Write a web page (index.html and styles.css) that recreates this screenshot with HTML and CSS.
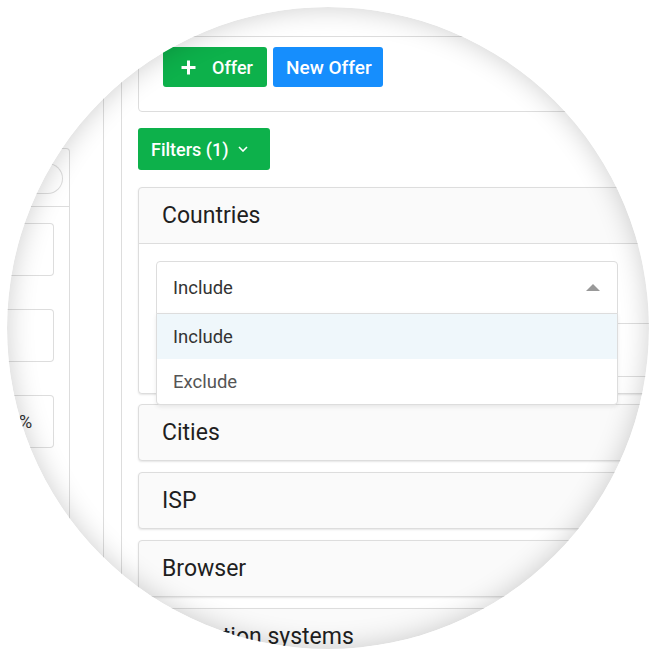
FILE: index.html
```html
<!DOCTYPE html>
<html lang="en">
<head>
  <meta charset="utf-8">
  <meta name="viewport" content="width=device-width, initial-scale=1.0">
  <title>Offer filters</title>
  <link rel="stylesheet" href="styles.css">
</head>
<body>

  <div class="lens">
    <div class="screen">

      <!-- Sidebar (mostly cut off by the lens) -->
      <aside class="side">
        <div class="side-panel">
          <div class="side-head">
            <div class="pill"></div>
          </div>
          <div class="side-body">
            <div class="side-input"></div>
            <div class="side-input"></div>
            <div class="side-input"><span>%</span></div>
          </div>
        </div>
      </aside>

      <!-- Main column -->
      <main class="main">

        <div class="card actions">
          <button class="btn btn-green btn-offer" type="button">
            <svg width="17" height="17" viewBox="0 0 17 17" aria-hidden="true">
              <path d="M8.5 1.5v14M1.5 8.5h14" stroke="#fff" stroke-width="3" fill="none"/>
            </svg>
            Offer
          </button>
          <button class="btn btn-blue btn-new" type="button">New Offer</button>
        </div>

        <button class="btn btn-green btn-filters" type="button">
          Filters (1)
          <svg width="10" height="6" viewBox="0 0 10 6" aria-hidden="true">
            <polyline points="1,1 5,5 9,1" stroke="#fff" stroke-width="1.6" fill="none"/>
          </svg>
        </button>

        <section class="panel open">
          <h2 class="panel-head">Countries</h2>
          <div class="panel-body">
            <div class="select-wrap">
              <div class="select">
                <span>Include</span>
                <svg width="14" height="7" viewBox="0 0 14 7" aria-hidden="true">
                  <polygon points="0,7 7,0 14,7" fill="#999"/>
                </svg>
              </div>
              <ul class="dropdown">
                <li class="active">Include</li>
                <li>Exclude</li>
              </ul>
            </div>
            <div class="tags-box"></div>
          </div>
        </section>

        <section class="panel"><h2 class="panel-head">Cities</h2></section>
        <section class="panel"><h2 class="panel-head">ISP</h2></section>
        <section class="panel"><h2 class="panel-head">Browser</h2></section>
        <section class="panel"><h2 class="panel-head">Operation systems</h2></section>

      </main>
    </div>
  </div>

</body>
</html>
```

FILE: styles.css
```css
body { margin: 0; background: #fff; font-family: Roboto, "Liberation Sans", sans-serif; color: #222; }

/* round magnifier */
.lens { position: relative; width: 642px; height: 642px; margin: 7px 0 0 7px; border-radius: 50%; overflow: hidden; background: #fff; }
.lens::after { content: ""; position: absolute; inset: 0; border-radius: 50%; box-shadow: inset 0 0 28px rgba(0,0,0,0.2); pointer-events: none; }
.screen { display: flex; width: 780px; margin: -7px 0 0 -7px; }

/* sidebar */
.side { width: 104px; box-sizing: border-box; padding: 148px 33px 0 0; border-right: 1px solid #ddd; height: 700px; }
.side-panel { border: 1px solid #ddd; border-left: none; border-radius: 0 4px 0 0; height: 560px; }
.side-head { height: 58px; box-sizing: border-box; padding-top: 14px; border-bottom: 1px solid #ddd; }
.pill { width: 63px; height: 31px; box-sizing: border-box; border: 1px solid #ddd; border-left: none; border-radius: 0 16px 16px 0; }
.side-body { padding-top: 16px; }
.side-input { width: 54px; height: 53px; box-sizing: border-box; border: 1px solid #ddd; border-left: none; border-radius: 0 4px 4px 0; margin-bottom: 33px; display: flex; align-items: center; padding-left: 19px; font-size: 18px; color: #333; }

/* main column */
.main { flex: 1; margin-left: 17px; border-left: 1px solid #ddd; padding: 36px 0 0 16px; }

.card { border: 1px solid #ddd; border-radius: 4px; }
.actions { display: flex; gap: 6px; padding: 10px 0 24px 24px; }

.btn { display: flex; align-items: center; height: 40px; border: none; border-radius: 3px; color: #fff; font-family: Roboto, "Liberation Sans", sans-serif; font-size: 18px; font-weight: 500; padding: 0; cursor: pointer; }
.btn-green { background: #0db14b; }
.btn-blue { background: #168efd; }
.btn-offer { width: 104px; padding-left: 17px; gap: 15px; }
.btn-new { width: 110px; padding-left: 13px; font-size: 19px; }
.btn-filters { height: 42px; width: 132px; margin-top: 16px; padding-left: 13px; gap: 9px; }

/* filter panels */
.panel { border: 1px solid #ddd; border-radius: 4px; background: #fafafa; box-shadow: 0 1px 2px rgba(0,0,0,0.1); margin-bottom: 11px; }
.panel.open { margin-top: 17px; margin-bottom: 10px; }
.panel-head { margin: 0; height: 55px; display: flex; align-items: center; padding-left: 23px; font-size: 23px; font-weight: 400; color: #1f1f1f; }
.open .panel-head { border-bottom: 1px solid #ddd; }
.panel-body { background: #fff; padding: 17px 0 16px 17px; border-radius: 0 0 4px 4px; }

.select-wrap { position: relative; width: 462px; }
.select { height: 53px; box-sizing: border-box; border: 1px solid #ddd; border-radius: 4px 4px 0 0; display: flex; align-items: center; justify-content: space-between; padding: 0 17px 0 16px; font-size: 18.5px; color: #333; background: #fff; }
.dropdown { position: absolute; top: 52px; left: 0; right: 0; margin: 0; padding: 0; list-style: none; background: #fff; border: 1px solid #ddd; border-radius: 0 0 4px 4px; box-shadow: 0 2px 4px rgba(0,0,0,0.08); z-index: 2; }
.dropdown li { height: 45px; display: flex; align-items: center; padding-left: 16px; font-size: 18.5px; color: #555; }
.dropdown li.active { background: #eff7fb; color: #333; }
.tags-box { margin-top: 9px; height: 54px; width: 560px; box-sizing: border-box; border: 1px solid #ddd; border-radius: 4px; }
```
